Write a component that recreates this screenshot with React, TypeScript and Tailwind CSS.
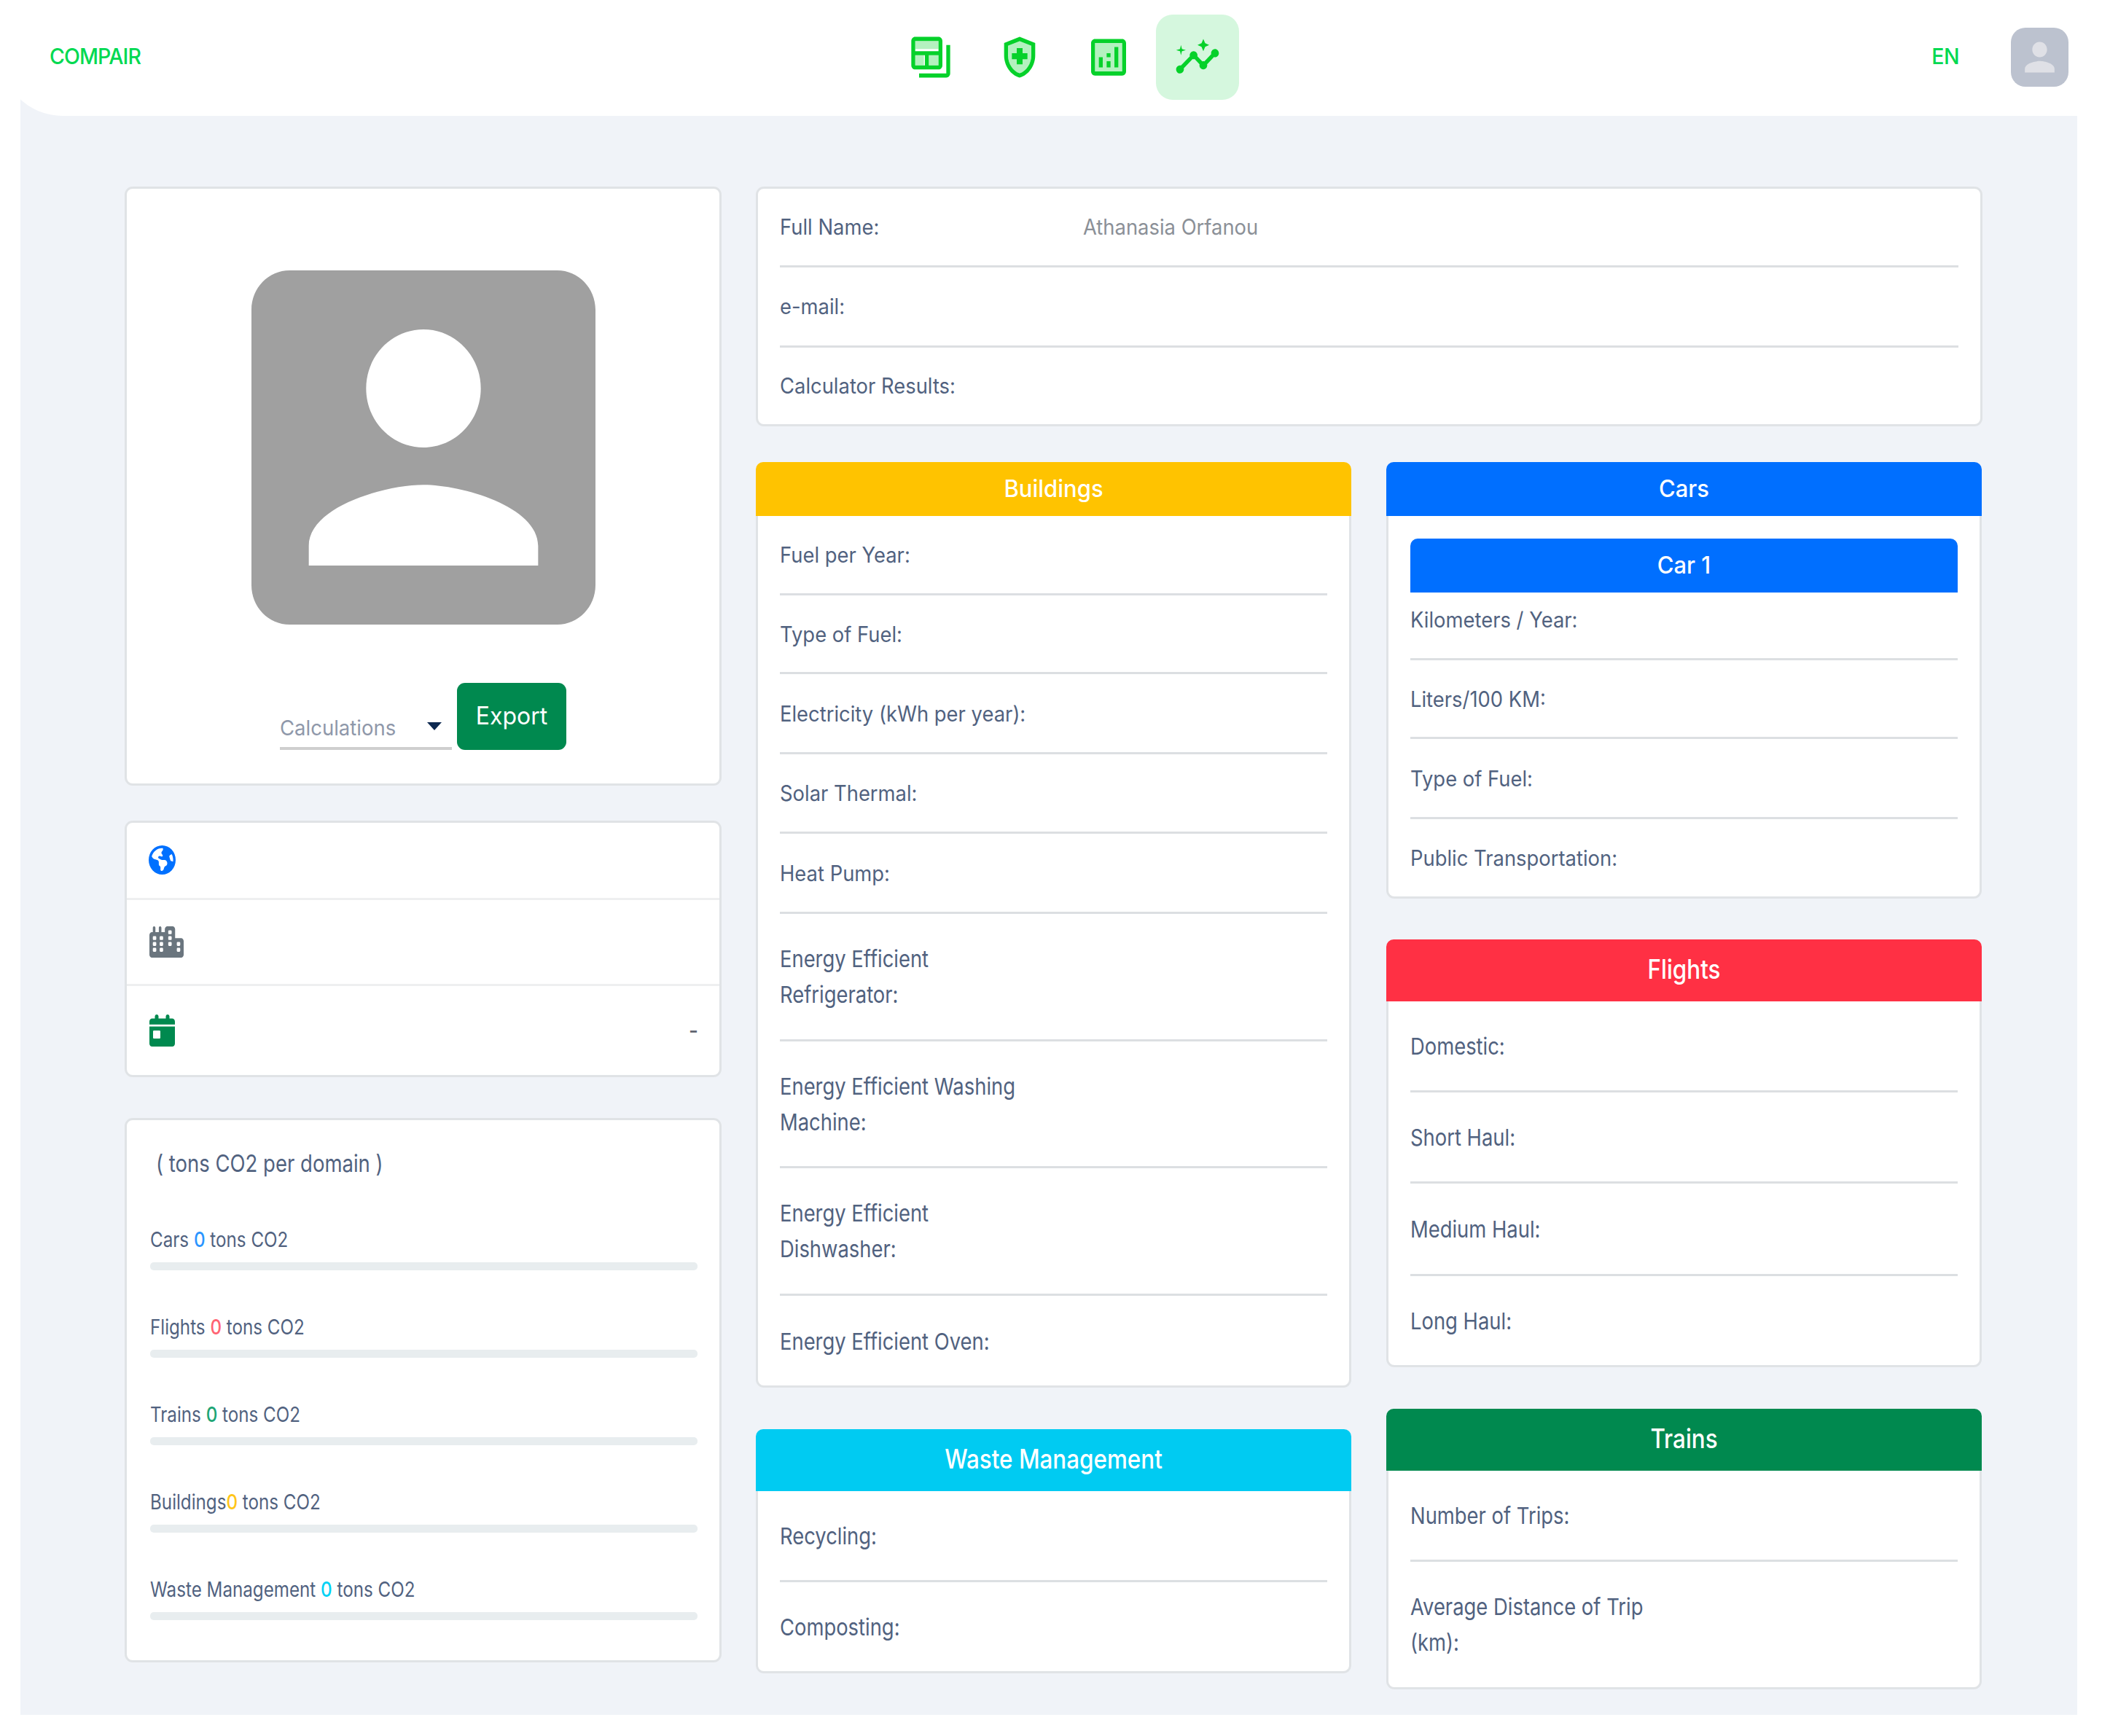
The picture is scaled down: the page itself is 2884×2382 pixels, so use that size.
import type { ReactNode } from "react";
import { FaCalendarDay, FaCity, FaEarthAmericas } from "react-icons/fa6";

type Field = { label: ReactNode; box: string; tall?: boolean };

const buildings: Field[] = [
  { label: "Fuel per Year:", box: "h-[109px]" },
  { label: "Type of Fuel:", box: "h-[108px]" },
  { label: "Electricity (kWh per year):", box: "h-[110px]" },
  { label: "Solar Thermal:", box: "h-[109px]" },
  { label: "Heat Pump:", box: "h-[110px]" },
  { label: <>Energy Efficient<br />Refrigerator:</>, box: "h-[175px]", tall: true },
  { label: <>Energy Efficient Washing<br />Machine:</>, box: "h-[174px]", tall: true },
  { label: <>Energy Efficient<br />Dishwasher:</>, box: "h-[175px]", tall: true },
  { label: "Energy Efficient Oven:", box: "h-[123px]", tall: true },
];

const waste: Field[] = [
  { label: "Recycling:", box: "h-[125px]", tall: true },
  { label: "Composting:", box: "h-[122px]", tall: true },
];

const cars: Field[] = [
  { label: "Kilometers / Year:", box: "h-[93px] pb-[16px]" },
  { label: "Liters/100 KM:", box: "h-[108px]" },
  { label: "Type of Fuel:", box: "h-[110px]" },
  { label: "Public Transportation:", box: "h-[106px]" },
];

const flights: Field[] = [
  { label: "Domestic:", box: "h-[125px]", tall: true },
  { label: "Short Haul:", box: "h-[125px]", tall: true },
  { label: "Medium Haul:", box: "h-[127px]", tall: true },
  { label: "Long Haul:", box: "h-[122px]", tall: true },
];

const trains: Field[] = [
  { label: "Number of Trips:", box: "h-[125px]", tall: true },
  { label: <>Average Distance of Trip<br />(km):</>, box: "h-[172px]", tall: true },
];

const totals = [
  { name: "Cars ", color: "text-[#2b95ff]" },
  { name: "Flights ", color: "text-[#ff6473]" },
  { name: "Trains ", color: "text-[#1ea574]" },
  { name: "Buildings", color: "text-[#ffc61a]" },
  { name: "Waste Management ", color: "text-[#00d2f5]" },
];

function Fields({ items }: { items: Field[] }) {
  return (
    <div className="px-[30px]">
      {items.map((f, i) => (
        <div
          key={i}
          className={`flex items-center border-[#dcdfe2] ${i < items.length - 1 ? "border-b-[3px]" : ""} ${f.box}`}
        >
          <span
            className={`whitespace-nowrap text-[27.4px] leading-[42px] ${f.tall ? "scale-y-[1.155]" : "scale-y-[1.07]"}`}
          >
            {f.label}
          </span>
        </div>
      ))}
    </div>
  );
}

function Panel({
  title,
  head,
  tall,
  children,
}: {
  title: string;
  head: string;
  tall?: boolean;
  children: ReactNode;
}) {
  return (
    <section className="flex flex-col">
      <h2
        className={`flex items-center justify-center rounded-t-[10px] font-medium text-white ${
          tall ? "h-[85px] text-[31.4px]" : "h-[74px] text-[31px]"
        } ${head}`}
      >
        <span className={tall ? "-mt-[1px] scale-y-[1.16]" : "scale-y-[1.04]"}>{title}</span>
      </h2>
      <div className="rounded-b-[11px] border-x-[3px] border-b-[3px] border-[#e0e3e6] bg-white">{children}</div>
    </section>
  );
}

function NavIcon({ active, children }: { active?: boolean; children: ReactNode }) {
  return (
    <button
      className={`flex h-[117px] w-[114px] items-center justify-center rounded-[23px] ${active ? "bg-[#d5f7de]" : ""}`}
    >
      <svg className="h-[67px] w-[64px] fill-[#06d12a]" viewBox="0 0 24 24" preserveAspectRatio="none">
        {children}
      </svg>
    </button>
  );
}

const card = "rounded-[11px] border-[3px] border-[#e0e3e6] bg-white";

export default function App() {
  return (
    <div className="h-[2382px] w-[2884px] overflow-hidden bg-white font-['Inter',sans-serif] text-[#51627f]">
      <header className="relative z-10 flex h-[159px] items-start rounded-bl-[86px] bg-white font-medium text-[#00d951]">
        <div className="flex h-[156px] w-[1220px] items-center pl-[68px] text-[28.5px] tracking-[-0.9px]">
          <span className="scale-y-[1.05]">COMPAIR</span>
        </div>
        <nav className="flex gap-[8px] pt-[20px]">
          <NavIcon>
            <path opacity=".3" d="M4 4h12v4H4zM4 11h4.500v5H4zM11 11h5v5h-5z" />
            <path d="M20 6v14H6v2h14c1.100 0 2-.9 2-2V6h-2z" />
            <path d="M16 2H4c-1.100 0-2 .9-2 2v12c0 1.100.9 2 2 2h12c1.100 0 2-.9 2-2V4c0-1.100-.9-2-2-2zM9 16H4v-5h5v5zm7 0h-5v-5h5v5zm0-7H4V4h12v5z" />
          </NavIcon>
          <NavIcon>
            <path opacity=".3" d="M6 6.390v4.700c0 4 2.550 7.700 6 8.830 3.450-1.130 6-4.820 6-8.830v-4.700l-6-2.250-6 2.250z" />
            <path d="M10.500 13H8v-3h2.500V7.500h3V10H16v3h-2.500v2.500h-3V13zM12 2L4 5v6.090c0 5.050 3.410 9.760 8 10.910 4.590-1.150 8-5.860 8-10.910V5l-8-3zm6 9.090c0 4-2.550 7.700-6 8.830-3.450-1.130-6-4.820-6-8.830v-4.700l6-2.250 6 2.250v4.700z" />
          </NavIcon>
          <NavIcon>
            <path opacity=".3" d="M5 5h14v14H5z" />
            <path d="M19 3H5c-1.100 0-2 .9-2 2v14c0 1.100.9 2 2 2h14c1.100 0 2-.9 2-2V5c0-1.100-.9-2-2-2zm0 16H5V5h14v14z" />
            <path d="M7 12h2v5H7zM15 7h2v10h-2zM11 14h2v3h-2zM11 10h2v2h-2z" />
          </NavIcon>
          <NavIcon active>
            <path d="M21 8c-1.450 0-2.260 1.440-1.930 2.510l-3.550 3.560c-.3-.09-.74-.09-1.040 0l-2.550-2.550C12.270 10.450 11.460 9 10 9c-1.450 0-2.270 1.440-1.930 2.520l-4.560 4.550C2.440 15.740 1 16.550 1 18c0 1.100.9 2 2 2 1.450 0 2.260-1.440 1.930-2.510l4.550-4.560c.3.09.74.09 1.040 0l2.550 2.550C12.730 16.550 13.540 18 15 18c1.450 0 2.270-1.440 1.930-2.520l3.560-3.550c1.070.33 2.510-.48 2.510-1.930 0-1.100-.9-2-2-2z" />
            <path d="M15 9l.94-2.070L18 6l-2.060-.93L15 3l-.92 2.070L12 6l2.080.93zM3.500 11L4 9l2-.5L4 8l-.5-2L3 8l-2 .5L3 9z" />
          </NavIcon>
        </nav>
        <div className="ml-auto flex h-[156px] items-center pr-[46px]">
          <span className="mr-[71px] scale-y-[1.05] text-[28.5px] tracking-[-0.5px]">EN</span>
          <div className="flex h-[81px] w-[79px] items-center justify-center rounded-[20px] bg-[#bcc2cf]">
            <svg className="h-[63px] w-[61px] fill-[#dfe0e6]" viewBox="0 0 24 24" preserveAspectRatio="none">
              <path d="M12 12c2.210 0 4-1.790 4-4s-1.790-4-4-4-4 1.790-4 4 1.790 4 4 4zm0 2c-2.670 0-8 1.340-8 4v2h16v-2c0-2.660-5.330-4-8-4z" />
            </svg>
          </div>
        </div>
      </header>

      <main className="-mt-[79px] ml-[28px] flex h-[2273px] w-[2822px] gap-[47px] bg-[#f0f3f8] pl-[143px] pt-[176px]">
        <aside className="flex w-[819px] flex-col">
          <section className={`flex h-[822px] flex-col items-center pt-[112px] ${card}`}>
            <svg className="h-[486px] w-[472px] fill-[#a0a0a0]" viewBox="3 3 18 18" preserveAspectRatio="none">
              <path d="M3 5v14c0 1.100.89 2 2 2h14c1.100 0 2-.9 2-2V5c0-1.100-.9-2-2-2H5c-1.110 0-2 .9-2 2zm12 4c0 1.660-1.340 3-3 3s-3-1.340-3-3 1.340-3 3-3 3 1.340 3 3zm-9 8c0-2 4-3.100 6-3.100s6 1.100 6 3.100v1H6v-1z" />
            </svg>
            <div className="mt-[80px] flex items-end gap-[7px]">
              <div className="flex h-[63px] w-[236px] items-center justify-between border-b-[4px] border-[#cfcfcf] pr-[14px] text-[27.5px] text-[#8f98aa]">
                <span className="scale-y-[1.04] pt-[7px]">Calculations</span>
                <svg className="mt-[2px] h-[11px] w-[20px] fill-[#0d2850]" viewBox="0 0 20 11">
                  <path d="M0 0h20L10 11z" />
                </svg>
              </div>
              <button className="h-[92px] w-[150px] rounded-[11px] bg-[#00894f] text-[32px] text-white">
                <span className="inline-block scale-y-[1.04]">Export</span>
              </button>
            </div>
          </section>

          <section className={`mt-[48px] flex h-[352px] flex-col ${card}`}>
            <div className="flex h-[106px] items-center border-b-[3px] border-[#eeeff0] pb-[1px] pl-[30px]">
              <FaEarthAmericas className="h-[40px] w-[37px] text-[#0070ff]" preserveAspectRatio="none" />
            </div>
            <div className="flex h-[118px] items-center border-b-[3px] border-[#eeeff0] pl-[31px]">
              <FaCity className="h-[43px] w-[47px] text-[#6a757e]" preserveAspectRatio="none" />
            </div>
            <div className="flex flex-1 items-center justify-between pl-[31px] pr-[29px]">
              <FaCalendarDay className="h-[44px] w-[35px] text-[#00894f]" preserveAspectRatio="none" />
              <span className="text-[28px] font-medium text-[#5f6570]">-</span>
            </div>
          </section>

          <section className={`mt-[56px] flex h-[747px] flex-col pl-[32px] pr-[30px] ${card}`}>
            <h3 className="mt-[38px] h-[42px] pl-[8px] text-[27.5px] leading-[42px]">
              <span className="inline-block scale-y-[1.2]">( tons CO2 per domain )</span>
            </h3>
            <div className="mt-[67px] flex flex-col gap-[61px]">
              {totals.map((t) => (
                <div key={t.name} className="flex h-[59px] flex-col justify-between">
                  <p className="text-[24.2px] leading-[36px]">
                    <span className="inline-block scale-y-[1.16] whitespace-pre">
                      {t.name}
                      <span className={`font-medium ${t.color}`}>0</span> tons CO2
                    </span>
                  </p>
                  <div className="h-[11px] rounded-[5px] bg-[#e8edef]" />
                </div>
              ))}
            </div>
          </section>
        </aside>

        <div className="flex w-[1683px] flex-col">
          <section className={`h-[329px] px-[30px] ${card}`}>
            {["Full Name:", "e-mail:", "Calculator Results:"].map((label, i) => (
              <div
                key={label}
                className={`flex items-center border-[#dcdfe2] text-[27.4px] ${
                  i === 0 ? "h-[108px] border-b-[3px]" : i === 1 ? "h-[110px] border-b-[3px]" : "h-[105px]"
                }`}
              >
                <span className="w-[416px] scale-y-[1.07]">{label}</span>
                {i === 0 && <span className="scale-y-[1.07] text-[#8b9097]">Athanasia Orfanou</span>}
              </div>
            ))}
          </section>

          <div className="mt-[49px] flex gap-[48px]">
            <div className="flex w-[817px] flex-col gap-[57px]">
              <Panel title="Buildings" head="bg-[#ffc300]">
                <Fields items={buildings} />
              </Panel>
              <Panel title="Waste Management" head="bg-[#00cbf2]" tall>
                <Fields items={waste} />
              </Panel>
            </div>
            <div className="flex w-[817px] flex-col">
              <Panel title="Cars" head="bg-[#006fff]">
                <div className="px-[30px] pt-[31px]">
                  <h3 className="flex h-[74px] items-center justify-center rounded-t-[10px] bg-[#006fff] text-[31px] font-medium text-white">
                    <span className="scale-y-[1.04]">Car 1</span>
                  </h3>
                </div>
                <Fields items={cars} />
              </Panel>
              <div className="mt-[56px]">
                <Panel title="Flights" head="bg-[#ff3044]" tall>
                  <Fields items={flights} />
                </Panel>
              </div>
              <div className="mt-[57px]">
                <Panel title="Trains" head="bg-[#00894f]" tall>
                  <Fields items={trains} />
                </Panel>
              </div>
            </div>
          </div>
        </div>
      </main>
    </div>
  );
}
